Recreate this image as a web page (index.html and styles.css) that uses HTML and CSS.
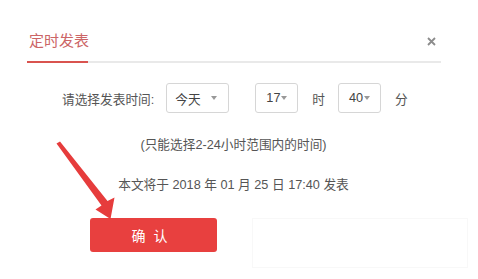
FILE: index.html
```html
<!DOCTYPE html>
<html lang="zh-CN">
<head>
<meta charset="utf-8">
<title>定时发表</title>
<link rel="stylesheet" href="styles.css">
</head>
<body>
<div class="dialog">
  <div class="header">
    <div class="tab">定时发表</div>
    <div class="close" aria-label="关闭">
      <svg width="9" height="9" viewBox="0 0 9 9"><path d="M1 1 L8 8 M8 1 L1 8" stroke="#8c8c8c" stroke-width="1.8" fill="none"/></svg>
    </div>
  </div>
  <div class="row">
    <span class="label">请选择发表时间:</span>
    <div class="select sel-day"><span>今天</span><i class="caret"></i></div>
    <div class="select sel-num"><span>17</span><i class="caret"></i></div>
    <span class="unit">时</span>
    <div class="select sel-num"><span>40</span><i class="caret"></i></div>
    <span class="unit">分</span>
  </div>
  <div class="hint">(只能选择2-24小时范围内的时间)</div>
  <div class="summary">本文将于 2018 年 01 月 25 日 17:40 发表</div>
  <div class="actions">
    <button class="btn-ok">确 认</button>
    <div class="btn-ghost"></div>
  </div>
  <svg class="arrow" width="478" height="279" viewBox="0 0 478 279">
    <path d="M56.5 143.5 L60 141.5 L107.5 201 L114.5 197.5 L110.5 219 L95.5 209.5 L101.5 205.5 Z" fill="#e63c3c"/>
  </svg>
</div>
</body>
</html>
```
FILE: styles.css
```css
html, body {
  margin: 0;
  padding: 0;
  background: #ffffff;
}
body {
  font-family: "Liberation Sans", "Noto Sans CJK SC", sans-serif;
  font-size: 12.7px;
  color: #555555;
}
.dialog {
  position: relative;
  width: 478px;
  height: 279px;
  overflow: hidden;
  display: flex;
  flex-direction: column;
}
.header {
  margin: 0 37px 0 27px;
  height: 61px;
  display: flex;
  justify-content: space-between;
  align-items: flex-end;
  border-bottom: 2px solid #e9e9e9;
}
.tab {
  font-size: 15px;
  line-height: 20px;
  color: #cc6566;
  padding: 0 0 10px 2px;
  border-bottom: 2px solid #d9534f;
  margin-bottom: -2px;
  width: 59px;
  white-space: nowrap;
}
.close {
  align-self: flex-start;
  margin-top: 37px;
  margin-right: 5px;
  width: 9px;
  height: 9px;
  display: flex;
}
.row {
  margin-top: 20px;
  padding-left: 62px;
  display: flex;
  align-items: center;
  height: 30px;
}
.label {
  color: #555;
  margin-right: 12px;
  white-space: nowrap;
}
.select {
  box-sizing: border-box;
  height: 30px;
  border: 1px solid #d6d6d6;
  border-radius: 3px;
  display: flex;
  align-items: center;
  color: #444;
}
.sel-day {
  width: 63px;
  padding-left: 8px;
}
.sel-day .caret {
  margin-left: 10px;
}
.sel-num {
  width: 43px;
  padding-left: 10px;
  margin-left: 26px;
}
.sel-num + .unit + .sel-num {
  margin-left: 0;
}
.caret {
  display: inline-block;
  width: 0;
  height: 0;
  border-left: 3.5px solid transparent;
  border-right: 3.5px solid transparent;
  border-top: 4px solid #999;
  margin-left: 1px;
}
.unit {
  color: #555;
  margin: 0 13px 0 14px;
}
.hint {
  margin: 22px 38px 0 27px;
  text-align: center;
  line-height: 20px;
  color: #555;
}
.summary {
  margin: 20px 38px 0 27px;
  text-align: center;
  line-height: 20px;
  color: #555;
}
.actions {
  margin-top: 23px;
  padding-left: 90px;
  display: flex;
  align-items: flex-start;
}
.btn-ok {
  width: 127px;
  height: 34px;
  border: none;
  border-radius: 3px;
  background: #e8403f;
  color: #fff;
  font-family: "Liberation Sans", "Noto Sans CJK SC", sans-serif;
  font-size: 14px;
  letter-spacing: 2px;
  padding: 0 6px 0 0;
}
.btn-ghost {
  margin-left: 35px;
  width: 216px;
  height: 50px;
  box-sizing: border-box;
  border: 1px solid #f8f8f8;
}
.arrow {
  position: absolute;
  left: 0;
  top: 0;
  pointer-events: none;
}
```
